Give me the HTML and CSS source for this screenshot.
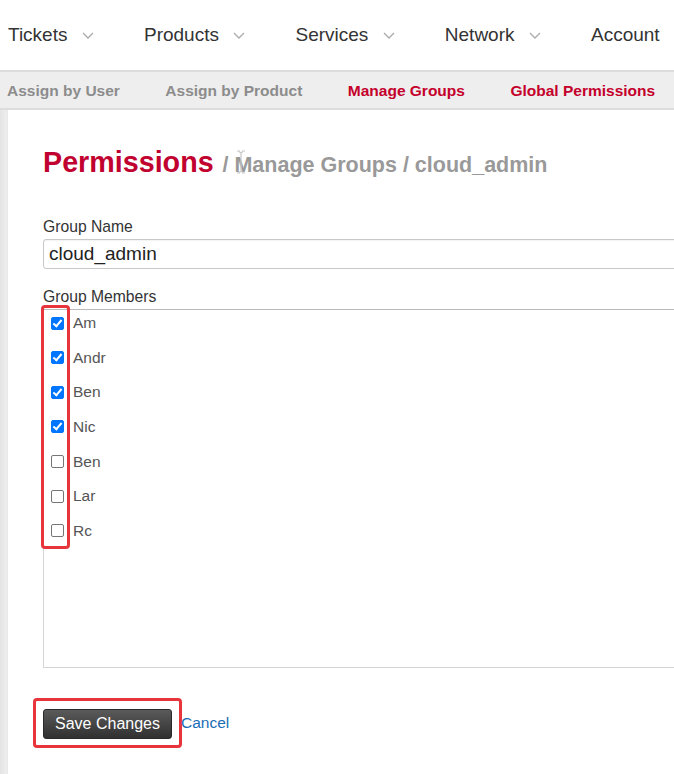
FILE: index.html
```html
<!DOCTYPE html>
<html>
<head>
<meta charset="utf-8">
<link rel="stylesheet" href="styles.css">
</head>
<body>
<nav class="topnav">
  <div class="nav-item">Tickets<svg class="chev" viewBox="0 0 12 7"><polyline points="1,1 6,6 11,1"/></svg></div>
  <div class="nav-item">Products<svg class="chev" viewBox="0 0 12 7"><polyline points="1,1 6,6 11,1"/></svg></div>
  <div class="nav-item">Services<svg class="chev" viewBox="0 0 12 7"><polyline points="1,1 6,6 11,1"/></svg></div>
  <div class="nav-item">Network<svg class="chev" viewBox="0 0 12 7"><polyline points="1,1 6,6 11,1"/></svg></div>
  <div class="nav-item">Account</div>
</nav>
<nav class="subnav">
  <a class="sub-item">Assign by User</a>
  <a class="sub-item">Assign by Product</a>
  <a class="sub-item active">Manage Groups</a>
  <a class="sub-item active">Global Permissions</a>
</nav>
<div class="page">
  <div class="strip"></div>
  <main class="content">
    <h1 class="title"><span class="title-main">Permissions</span> <span class="title-sub">/ Manage Groups / cloud_admin</span><svg class="ibeam" viewBox="0 0 10 24"><path d="M1 1 H4 M6 1 H9 M5 2 V22 M1 23 H4 M6 23 H9 M3 1.5 L5 3 L7 1.5 M3 22.5 L5 21 L7 22.5"/></svg></h1>
    <label class="label">Group Name</label>
    <div class="input">cloud_admin</div>
    <label class="label members-label">Group Members</label>
    <div class="members">
      <div class="annot annot-checks"></div>
      <div class="member"><span class="cb checked"></span><span class="name">Am</span></div>
      <div class="member"><span class="cb checked"></span><span class="name">Andr</span></div>
      <div class="member"><span class="cb checked"></span><span class="name">Ben</span></div>
      <div class="member"><span class="cb checked"></span><span class="name">Nic</span></div>
      <div class="member"><span class="cb"></span><span class="name">Ben</span></div>
      <div class="member"><span class="cb"></span><span class="name">Lar</span></div>
      <div class="member"><span class="cb"></span><span class="name">Rc</span></div>
    </div>
    <div class="actions">
      <div class="annot annot-btn"></div>
      <button class="btn">Save Changes</button>
      <a class="cancel">Cancel</a>
    </div>
  </main>
</div>
</body>
</html>
```
FILE: styles.css
```css
html, body {
  margin: 0;
  padding: 0;
  background: #fff;
  overflow: hidden;
}
body {
  font-family: "Liberation Sans", Arial, sans-serif;
  width: 674px;
  height: 774px;
}
.topnav {
  display: flex;
  align-items: center;
  height: 70px;
  padding-left: 8px;
  gap: 50px;
  white-space: nowrap;
  color: #333;
  font-size: 19px;
  border-bottom: 2px solid #dcdcdc;
}
.nav-item {
  display: flex;
  align-items: center;
  flex: none;
}
.chev {
  width: 12px;
  height: 7px;
  margin-left: 14.5px;
  fill: none;
  stroke: #aaa;
  stroke-width: 1.3;
}
.subnav {
  display: flex;
  align-items: center;
  height: 36px;
  background: #eeeeee;
  padding-left: 7px;
  padding-top: 1px;
  gap: 45.5px;
  white-space: nowrap;
  border-bottom: 2px solid #dddddd;
  box-sizing: content-box;
  height: 35px;
}
.sub-item {
  font-size: 15.5px;
  font-weight: bold;
  color: #8c8c8c;
  flex: none;
}
.sub-item.active {
  color: #c4002b;
}
.page {
  display: flex;
  min-height: 700px;
}
.strip {
  width: 7px;
  flex: none;
  background: linear-gradient(to right, #e4e4e4, #eeeeee);
  border-right: 1px solid #e8e8e8;
}
.content {
  flex: none;
  width: 900px;
  padding-left: 35px;
  padding-top: 34px;
}
.title {
  position: relative;
  margin: 0;
  font-weight: bold;
  line-height: 34px;
  white-space: nowrap;
}
.title-main {
  font-size: 28.7px;
  color: #c10230;
}
.title-sub {
  font-size: 21.5px;
  color: #999;
}
.ibeam {
  position: absolute;
  left: 193px;
  top: 6px;
  width: 10px;
  height: 24px;
  fill: none;
  stroke: #c8c8c8;
  stroke-width: 1.2;
}
.label {
  display: block;
  font-size: 15.7px;
  color: #333;
  line-height: 18px;
  margin-top: 36px;
}
.input {
  margin-top: 3px;
  height: 28px;
  border: 1px solid #c8c8c8;
  border-radius: 3px;
  box-sizing: content-box;
  font-size: 19px;
  color: #222;
  line-height: 28px;
  padding-left: 5px;
  box-shadow: inset 0 1px 1px rgba(0,0,0,0.05);
}
.members-label {
  margin-top: 19px;
}
.members {
  position: relative;
  margin-top: 3px;
  height: 354px;
  border: 1px solid #d4d4d4;
  border-top-color: #bbbbbb;
  padding-top: 3px;
}
.member {
  display: flex;
  align-items: center;
  height: 20px;
  margin-bottom: 14.67px;
  padding-left: 7px;
}
.cb {
  width: 11px;
  height: 11px;
  border: 1px solid #767676;
  border-radius: 2px;
  flex: none;
  position: relative;
}
.cb.checked {
  background: #0075ff;
  border-color: #0075ff;
}
.cb.checked::after {
  content: "";
  position: absolute;
  left: 3px;
  top: 0px;
  width: 3px;
  height: 7px;
  border: solid #fff;
  border-width: 0 2px 2px 0;
  transform: rotate(40deg);
}
.name {
  margin-left: 9px;
  font-size: 15.5px;
  color: #555;
}
.annot {
  position: absolute;
  border: 3px solid #e8353b;
  border-radius: 4px;
  pointer-events: none;
}
.annot-checks {
  left: -3px;
  top: -5px;
  width: 23px;
  height: 238px;
}
.actions {
  position: relative;
  display: flex;
  align-items: center;
  margin-top: 41px;
}
.annot-btn {
  left: -10px;
  top: -11px;
  width: 143px;
  height: 44px;
}
.btn {
  width: 129px;
  height: 30px;
  border: 1px solid #2a2a2a;
  border-radius: 3px;
  background: linear-gradient(#5a5a5a, #303030);
  color: #fff;
  font-family: "Liberation Sans", Arial, sans-serif;
  font-size: 16px;
  padding: 0;
}
.cancel {
  margin-left: 9px;
  font-size: 15.5px;
  color: #1a6db5;
  position: relative;
  top: -1px;
}
```
